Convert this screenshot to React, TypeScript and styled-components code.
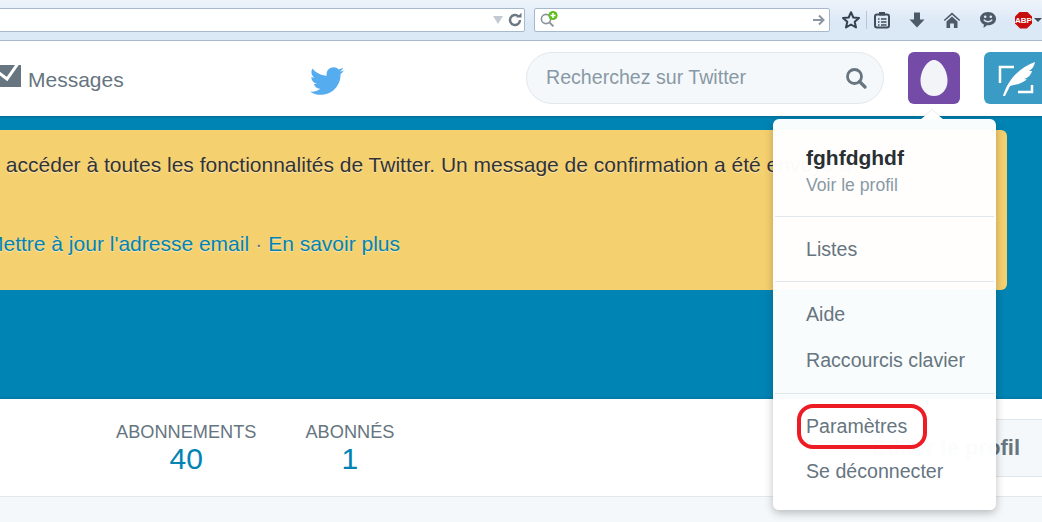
import React from 'react';
import styled, { createGlobalStyle } from 'styled-components';
import { FaTwitter } from 'react-icons/fa';

const GlobalStyle = createGlobalStyle`
  html, body {
    margin: 0;
    padding: 0;
    width: 1042px;
    height: 522px;
    overflow: hidden;
    background: #f5f8fa;
    font-family: "Liberation Sans", Arial, sans-serif;
  }
`;

const App = () => {
  return (
    <Page>
      <GlobalStyle />
      <Toolbar>
        <UrlBox>
          <DropTriangle />
          <svg width="16" height="16" viewBox="0 0 16 16">
            <path d="M13 8a5 5 0 1 1-1.6-3.7" fill="none" stroke="#6d7783" strokeWidth="2.4" />
            <path d="M9.5 5.6h5V.8z" fill="#6d7783" />
          </svg>
        </UrlBox>
        <SearchBox>
          <svg width="22" height="20" viewBox="0 0 22 20">
            <circle cx="7" cy="9" r="4.6" fill="none" stroke="#8a929b" strokeWidth="1.6" />
            <path d="M10.4 12.4 14.4 16.4" stroke="#8a929b" strokeWidth="2" />
            <circle cx="14" cy="5.5" r="4.6" fill="#5fbf1f" />
            <path d="M14 3v5M11.5 5.5h5" stroke="#fff" strokeWidth="1.6" />
          </svg>
          <svg width="14" height="14" viewBox="0 0 14 14">
            <path d="M1 7h10M7 2.5 11.5 7 7 11.5" fill="none" stroke="#8b96a3" strokeWidth="2" />
          </svg>
        </SearchBox>
        <ToolIcons>
          <ToolSlot $width={30}>
            <svg width="20" height="20" viewBox="0 0 20 20">
              <path d="M10 2.2 12.3 7.5 18 8 13.7 11.8 15 17.5 10 14.5 5 17.5 6.3 11.8 2 8 7.7 7.5z" fill="none" stroke="#33404e" strokeWidth="2" strokeLinejoin="round" />
            </svg>
          </ToolSlot>
          <ToolDivider />
          <ToolSlot $width={30}>
            <svg width="18" height="18" viewBox="0 0 18 18">
              <rect x="2" y="3.500" width="14" height="13" rx="2" fill="none" stroke="#414d5a" strokeWidth="2" />
              <rect x="6" y="1" width="6" height="3.500" fill="#414d5a" />
              <path d="M5 8h1.500M8 8h5.500M5 11h1.500M8 11h5.500M5 14h1.500M8 14h5.500" stroke="#414d5a" strokeWidth="1.500" />
            </svg>
          </ToolSlot>
          <ToolSlot $width={39}>
            <svg width="18" height="18" viewBox="0 0 18 18">
              <path d="M6 1.500h6v7h4.500L9 16.500 1.500 8.500H6z" fill="#4d5a68" />
            </svg>
          </ToolSlot>
          <ToolSlot $width={32}>
            <svg width="18" height="18" viewBox="0 0 18 18">
              <path d="M9 1.500.8 9l1 1.100L9 3.700l7.200 6.400 1-1.100z" fill="#4d5a68" />
              <path d="M3.500 10.500 9 5.600l5.500 4.900V17h-3.600v-4.500H7.100V17H3.500z" fill="#4d5a68" />
            </svg>
          </ToolSlot>
          <ToolSlot $width={39}>
            <svg width="18" height="18" viewBox="0 0 18 18">
              <path d="M9 1c4.700 0 8 2.900 8 6.700s-3.300 6.600-8 6.600l-1 0-3.500 2.700.4-3.600C2.500 12.300 1 10.200 1 7.700 1 3.900 4.300 1 9 1z" fill="#4d5a68" />
              <circle cx="6.200" cy="5.800" r="1.300" fill="#dfeaf6" />
              <circle cx="11.800" cy="5.800" r="1.300" fill="#dfeaf6" />
              <path d="M4.800 8.700c1.600 2.800 6.800 2.800 8.400 0" fill="none" stroke="#dfeaf6" strokeWidth="1.400" />
            </svg>
          </ToolSlot>
          <AbpSlot>
            <AbpBadge>ABP</AbpBadge>
            <AbpCaret />
          </AbpSlot>
        </ToolIcons>
      </Toolbar>

      <NavBar>
        <MessagesLink>
          <svg width="21" height="24" viewBox="0 0 21 24">
            <path d="M0 2h21v22H0z" fill="#66757f" />
            <path d="M-2 9 7 16 19-1" fill="none" stroke="#fff" strokeWidth="3" />
          </svg>
          Messages
        </MessagesLink>
        <BirdSlot>
          <FaTwitter size={34} color="#55acee" />
        </BirdSlot>
        <SearchPill>
          Recherchez sur Twitter
          <svg width="22" height="22" viewBox="0 0 22 22">
            <circle cx="9.500" cy="9.500" r="7" fill="none" stroke="#66757f" strokeWidth="2.800" />
            <path d="M14.500 14.500 20 20" stroke="#66757f" strokeWidth="3.200" strokeLinecap="round" />
          </svg>
        </SearchPill>
        <Avatar>
          <svg width="28" height="36" viewBox="0 0 28 36">
            <path d="M14 0c6.500 0 13.500 10.500 13.500 20.500C27.500 30 21.500 36 14 36S.5 30 .5 20.500C.5 10.500 7.500 0 14 0z" fill="#f2f4f8" />
          </svg>
        </Avatar>
        <TweetButton>
          <svg width="44" height="40" viewBox="0 0 44 40">
            <path d="M6 25V9h14M38 27v7H24" fill="none" stroke="#fff" strokeWidth="2.500" />
            <path d="M9 38C13 24 24 10 41 4c-1 5-3 7-6 9l3 0c-1 4-4 7-8 8l3 .5C27 26 21 27 16 28l-5 10z" fill="#fff" />
          </svg>
        </TweetButton>
      </NavBar>

      <Hero>
        <Notice>
          <NoticeText>
            pour accéder à toutes les fonctionnalités de Twitter. Un message de confirmation a été envoyé à
          </NoticeText>
          <NoticeLinks>
            <NoticeLink>Mettre à jour l'adresse email</NoticeLink>
            <Dot>·</Dot>
            <NoticeLink>En savoir plus</NoticeLink>
          </NoticeLinks>
        </Notice>
      </Hero>

      <StatsBar>
        <Stat>
          <StatLabel>ABONNEMENTS</StatLabel>
          <StatValue>40</StatValue>
        </Stat>
        <Stat>
          <StatLabel>ABONNÉS</StatLabel>
          <StatValue>1</StatValue>
        </Stat>
        <EditButton>Éditer le profil</EditButton>
      </StatsBar>

      <Menu>
        <MenuCaret />
        <ProfileSection>
          <ProfileName>fghfdghdf</ProfileName>
          <ProfileLink>Voir le profil</ProfileLink>
        </ProfileSection>
        <Divider />
        <MenuItem $height={64}>Listes</MenuItem>
        <Divider />
        <MenuGroup $top={9} $bottom={10}>
          <MenuItem $height={46}>Aide</MenuItem>
          <MenuItem $height={46}>Raccourcis clavier</MenuItem>
        </MenuGroup>
        <Divider />
        <MenuGroup $top={10} $bottom={16}>
          <MenuItem $height={45}>
            Paramètres
            <RedMark />
          </MenuItem>
          <MenuItem $height={45}>Se déconnecter</MenuItem>
        </MenuGroup>
      </Menu>
    </Page>
  );
};

const Page = styled.div`
  position: relative;
  width: 1042px;
  height: 522px;
  overflow: hidden;
  background: #f5f8fa;
`;

const Toolbar = styled.div`
  display: flex;
  align-items: flex-start;
  height: 32px;
  padding-top: 8px;
  background: linear-gradient(#eef4fb, #dbe8f6 60%);
  border-bottom: 1px solid #a8b8cc;
`;

const UrlBox = styled.div`
  display: flex;
  align-items: center;
  justify-content: flex-end;
  gap: 4px;
  box-sizing: border-box;
  width: 535px;
  height: 24px;
  margin-left: -10px;
  padding-right: 1px;
  flex-shrink: 0;
  background: #fff;
  border: 1px solid #a8b8cc;
  border-radius: 2px;
`;

const DropTriangle = styled.span`
  width: 0;
  height: 0;
  border-left: 5px solid transparent;
  border-right: 5px solid transparent;
  border-top: 8px solid #c3cad2;
`;

const SearchBox = styled.div`
  display: flex;
  align-items: center;
  justify-content: space-between;
  box-sizing: border-box;
  width: 296px;
  height: 24px;
  margin-left: 9px;
  padding: 0 3px 0 4px;
  flex-shrink: 0;
  background: #fff;
  border: 1px solid #a8b8cc;
  border-radius: 2px;
`;

const ToolIcons = styled.div`
  display: flex;
  align-items: center;
  height: 24px;
  margin-left: 6px;
  flex-shrink: 0;
`;

const ToolSlot = styled.div<{ $width: number }>`
  display: flex;
  align-items: center;
  justify-content: center;
  width: ${(p) => p.$width}px;
`;

const ToolDivider = styled.span`
  width: 1px;
  height: 18px;
  background: #b9c6d6;
`;

const AbpSlot = styled.div`
  display: flex;
  align-items: center;
  gap: 2px;
  margin-left: 8px;
`;

const AbpBadge = styled.span`
  display: block;
  width: 17px;
  height: 17px;
  clip-path: polygon(30% 0, 70% 0, 100% 30%, 100% 70%, 70% 100%, 30% 100%, 0 70%, 0 30%);
  background: #c70d0d;
  color: #fff;
  font-size: 8px;
  font-weight: 700;
  line-height: 17px;
  text-align: center;
`;

const AbpCaret = styled.span`
  width: 0;
  height: 0;
  border-left: 4px solid transparent;
  border-right: 4px solid transparent;
  border-top: 4px solid #3f4a56;
`;

const NavBar = styled.div`
  display: flex;
  align-items: center;
  box-sizing: border-box;
  height: 75px;
  background: #fff;
`;

const MessagesLink = styled.div`
  display: flex;
  align-items: center;
  gap: 7px;
  width: 310px;
  flex-shrink: 0;
  margin-top: 3px;
  color: #66757f;
  font-size: 21px;
  & svg {
    margin-bottom: 10px;
  }
`;

const BirdSlot = styled.div`
  display: flex;
  width: 216px;
  flex-shrink: 0;
  margin-top: 4px;
`;

const SearchPill = styled.div`
  display: flex;
  align-items: center;
  justify-content: space-between;
  box-sizing: border-box;
  width: 358px;
  height: 52px;
  margin-bottom: 1px;
  padding: 0 16px 1px 19px;
  flex-shrink: 0;
  background: #f5f8fa;
  border: 1px solid #e1e8ed;
  border-radius: 26px;
  color: #8899a6;
  font-size: 19.600px;
`;

const Avatar = styled.div`
  display: flex;
  align-items: center;
  justify-content: center;
  width: 52px;
  height: 52px;
  margin: 0 0 1px 24px;
  flex-shrink: 0;
  background: #744ca8;
  border-radius: 6px;
`;

const TweetButton = styled.div`
  display: flex;
  align-items: center;
  justify-content: center;
  width: 64px;
  height: 52px;
  margin: 0 0 1px 24px;
  flex-shrink: 0;
  background: #3a9bc4;
  border-radius: 6px;
`;

const Hero = styled.div`
  box-sizing: border-box;
  height: 283px;
  padding-top: 14px;
  background: linear-gradient(#006f98, #0084b4 3px, #0084b4 calc(100% - 3px), #007aa6);
`;

const Notice = styled.div`
  box-sizing: border-box;
  width: 1007px;
  height: 160px;
  padding-top: 21px;
  background: #f5d06f;
  border-radius: 0 6px 6px 0;
  overflow: hidden;
`;

const NoticeText = styled.p`
  margin: 0 0 0 -42px;
  color: #333;
  font-size: 21px;
  line-height: 28px;
  white-space: nowrap;
  text-shadow: 0 1px 1px rgba(255, 255, 255, 0.5);
`;

const NoticeLinks = styled.div`
  display: flex;
  gap: 6px;
  margin: 51px 0 0 -14px;
  font-size: 21px;
  line-height: 28px;
  white-space: nowrap;
  text-shadow: 0 1px 1px rgba(255, 255, 255, 0.5);
`;

const NoticeLink = styled.span`
  color: #0084b4;
`;

const Dot = styled.span`
  color: #66757f;
`;

const StatsBar = styled.div`
  display: flex;
  align-items: flex-start;
  box-sizing: border-box;
  height: 98px;
  padding: 23px 0 0 116px;
  background: #fff;
  border-bottom: 1px solid #e1e8ed;
`;

const Stat = styled.div`
  display: flex;
  flex-direction: column;
  align-items: center;
  margin-right: 49px;
`;

const StatLabel = styled.div`
  color: #66757f;
  font-size: 18.200px;
  line-height: 20px;
`;

const StatValue = styled.div`
  color: #0084b4;
  font-size: 30px;
  line-height: 34px;
`;

const EditButton = styled.div`
  display: flex;
  align-items: center;
  box-sizing: border-box;
  height: 58px;
  margin: -3px -40px 0 auto;
  padding: 0 61px 0 25px;
  white-space: nowrap;
  color: #66757f;
  font-size: 22px;
  font-weight: 700;
  background: #f5f8fa;
  border: 1px solid #e1e8ed;
`;

const Menu = styled.div`
  position: absolute;
  top: 119px;
  left: 773px;
  box-sizing: border-box;
  width: 223px;
  height: 391px;
  background: rgba(255, 255, 255, 0.975);
  border-radius: 6px;
  box-shadow: 0 3px 8px rgba(0, 0, 0, 0.25);
  color: #66757f;
  font-size: 19.600px;
`;

const MenuCaret = styled.span`
  position: absolute;
  top: -9px;
  left: 147px;
  width: 0;
  height: 0;
  border-left: 12px solid transparent;
  border-right: 12px solid transparent;
  border-bottom: 10px solid #fff;
  filter: drop-shadow(0 -1px 0 rgba(0, 0, 0, 0.08));
`;

const ProfileSection = styled.div`
  box-sizing: border-box;
  height: 97px;
  padding: 27px 0 0 33px;
`;

const ProfileName = styled.div`
  color: #292f33;
  font-size: 21px;
  font-weight: 700;
  line-height: 24px;
`;

const ProfileLink = styled.div`
  margin-top: 4px;
  color: #8899a6;
  font-size: 17.600px;
  line-height: 22px;
`;

const Divider = styled.div`
  height: 1px;
  margin: 0 2px;
  background: #e1e8ed;
`;

const MenuGroup = styled.div<{ $top: number; $bottom: number }>`
  padding: ${(p) => p.$top}px 0 ${(p) => p.$bottom}px;
`;

const MenuItem = styled.div<{ $height: number }>`
  position: relative;
  display: flex;
  align-items: center;
  height: ${(p) => p.$height}px;
  padding-left: 33px;
`;

const RedMark = styled.span`
  position: absolute;
  top: 0;
  left: 24px;
  box-sizing: border-box;
  width: 130px;
  height: 45px;
  border: 4px solid #ed1c24;
  border-radius: 16px;
`;

export default App;
